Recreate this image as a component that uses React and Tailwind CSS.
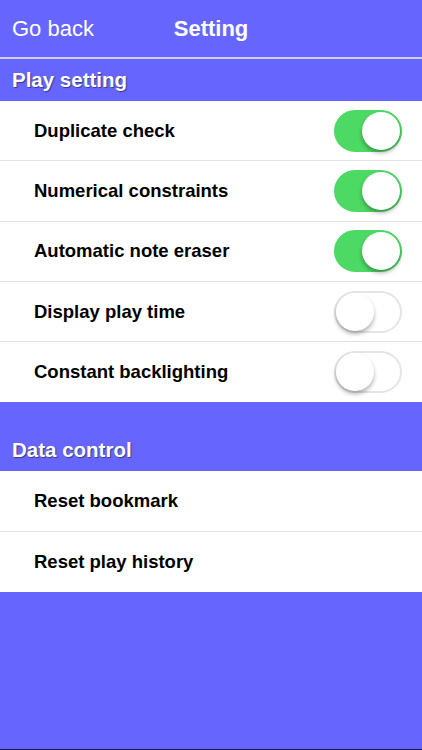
import { useState } from 'react';

const font = { fontFamily: '"Liberation Sans", Arial, sans-serif' };

function Toggle({ on, onChange }) {
  return (
    <button
      onClick={onChange}
      className={`relative w-[68px] h-[42px] rounded-full shrink-0 border-2 transition-colors ${
        on ? 'bg-[#4cd964] border-[#4cd964]' : 'bg-white border-[#e5e5e5]'
      }`}
    >
      <span
        className={`absolute top-0 w-[38px] h-[38px] rounded-full bg-white shadow-[0_3px_4px_rgba(0,0,0,0.3)] ${
          on ? 'left-[26px]' : 'left-0'
        }`}
      />
    </button>
  );
}

function Row({ label, last, children }) {
  return (
    <div
      className={`h-[60.3px] flex items-center justify-between pl-[34px] pr-[20px] bg-white ${
        last ? '' : 'border-b border-[#e2e2e2]'
      }`}
    >
      <span className="text-[18.5px] font-bold text-black">{label}</span>
      {children}
    </div>
  );
}

function SectionTitle({ children }) {
  return (
    <div className="h-[42px] flex items-center px-3 text-white text-[20.5px] font-bold [text-shadow:1px_1px_1px_rgba(0,0,0,0.45)]">
      {children}
    </div>
  );
}

export default function App() {
  const [opts, setOpts] = useState({
    duplicate: true,
    numerical: true,
    eraser: true,
    playTime: false,
    backlight: false,
  });
  const flip = (k) => setOpts((o) => ({ ...o, [k]: !o[k] }));

  return (
    <div className="h-[750px] bg-[#6666ff] flex flex-col border-b border-[#1c1c4e]" style={font}>
      <header className="h-[59px] shrink-0 flex items-center relative border-b-2 border-[#cfcfff]">
        <button className="pl-3 text-white text-[22px] font-light">Go back</button>
        <h1 className="absolute left-1/2 -translate-x-1/2 text-white text-[22px] font-bold">Setting</h1>
      </header>

      <SectionTitle>Play setting</SectionTitle>
      <div>
        <Row label="Duplicate check">
          <Toggle on={opts.duplicate} onChange={() => flip('duplicate')} />
        </Row>
        <Row label="Numerical constraints">
          <Toggle on={opts.numerical} onChange={() => flip('numerical')} />
        </Row>
        <Row label="Automatic note eraser">
          <Toggle on={opts.eraser} onChange={() => flip('eraser')} />
        </Row>
        <Row label="Display play time">
          <Toggle on={opts.playTime} onChange={() => flip('playTime')} />
        </Row>
        <Row label="Constant backlighting" last>
          <Toggle on={opts.backlight} onChange={() => flip('backlight')} />
        </Row>
      </div>

      <div className="h-[27px] shrink-0" />
      <SectionTitle>Data control</SectionTitle>
      <div>
        <Row label="Reset bookmark" />
        <Row label="Reset play history" last />
      </div>
    </div>
  );
}
